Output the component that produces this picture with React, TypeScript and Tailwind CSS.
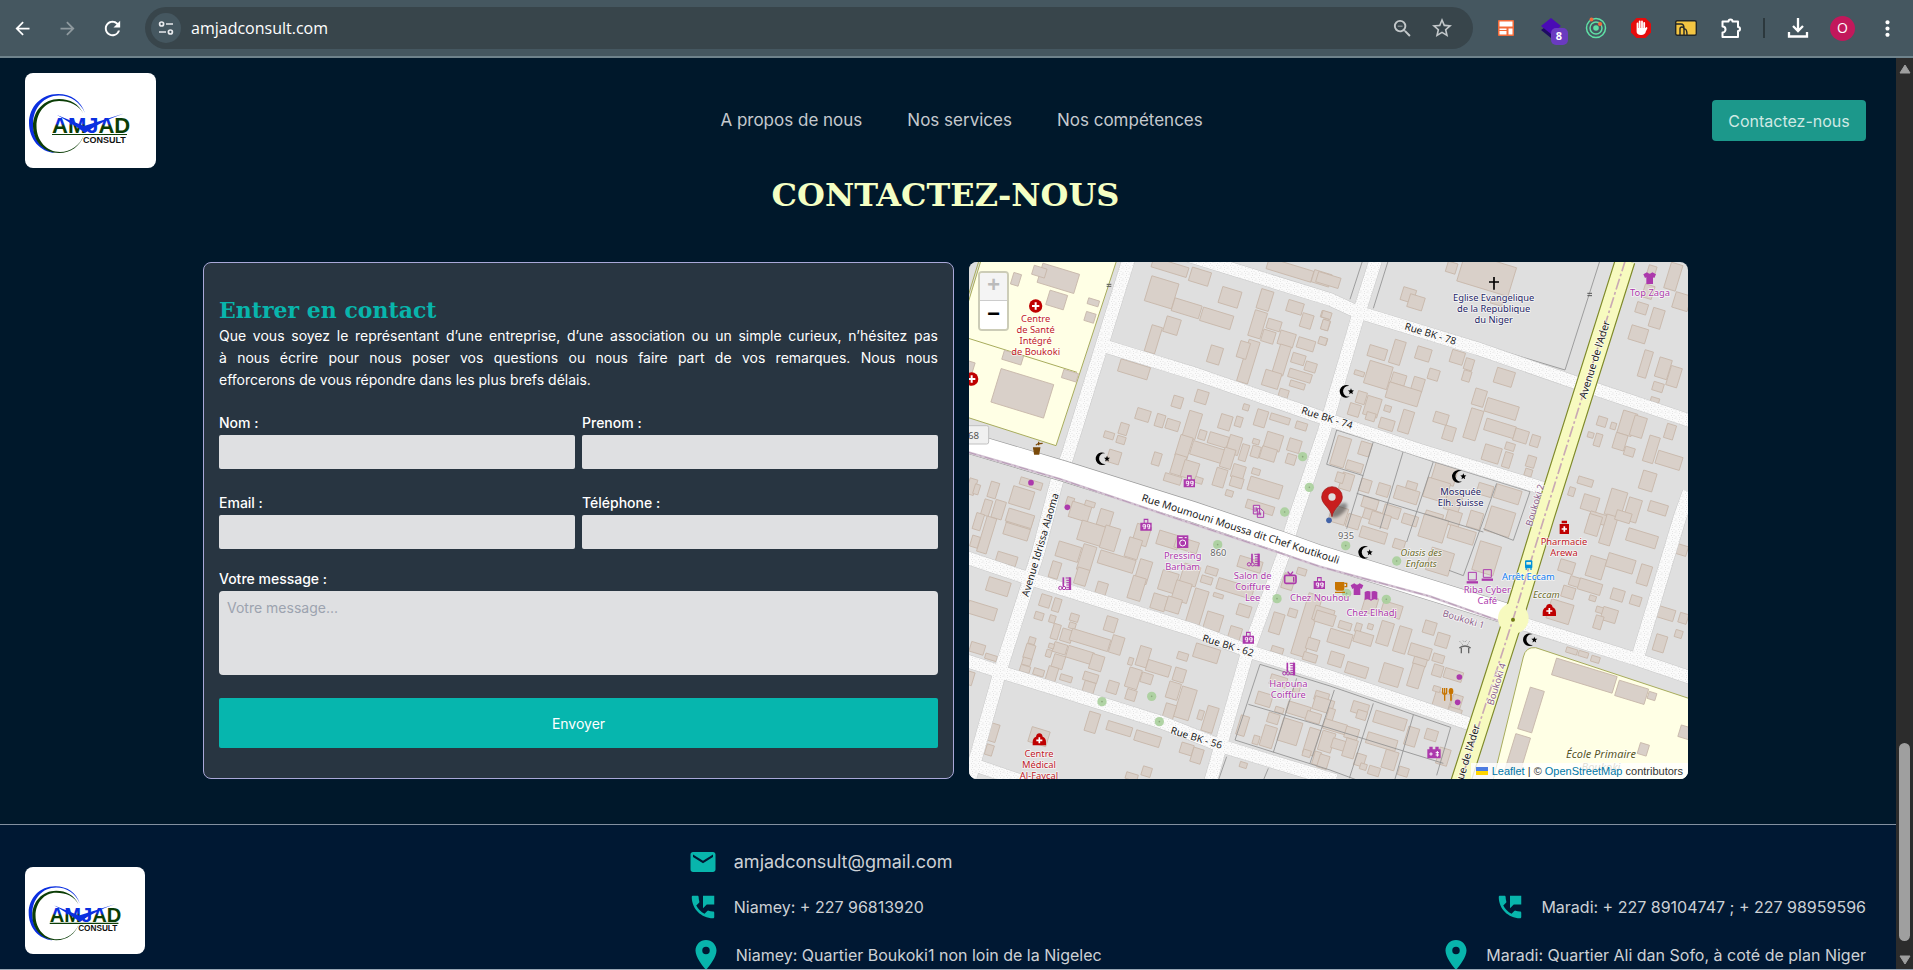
import type { ReactNode } from 'react'
import {
  MdArrowBack,
  MdArrowForward,
  MdEmail,
  MdLocationOn,
  MdMoreVert,
  MdPermPhoneMsg,
  MdRefresh,
  MdStarOutline,
  MdZoomOut,
} from 'react-icons/md'

/* ---------- Browser toolbar ---------- */

function ToolbarButton({ label, children }: { label: string; children: ReactNode }) {
  return (
    <button type="button" aria-label={label} className="flex h-10 w-[45px] shrink-0 items-center justify-center">
      {children}
    </button>
  )
}

function SiteInfoIcon() {
  return (
    <svg viewBox="0 0 16 16" className="size-4" fill="none" stroke="#e8eaed" strokeWidth="1.7">
      <circle cx="3.6" cy="4" r="2" />
      <path d="M8 4h7M1 12h7" />
      <circle cx="12.4" cy="12" r="2" />
    </svg>
  )
}

function BrowserToolbar() {
  return (
    <header className="flex h-[58px] shrink-0 items-center border-b-2 border-[#6f838c] bg-[#455760] pr-[3px]">
      <ToolbarButton label="Page précédente">
        <MdArrowBack size={21} color="#fff" />
      </ToolbarButton>
      <ToolbarButton label="Page suivante">
        <MdArrowForward size={21} color="#8f9a9f" />
      </ToolbarButton>
      <ToolbarButton label="Actualiser">
        <MdRefresh size={23} color="#fff" />
      </ToolbarButton>
      <div className="mx-[10px] flex h-[42px] flex-1 items-center rounded-full bg-[#38454b] pl-[6px]">
        <span className="flex size-[30px] items-center justify-center rounded-full bg-[#455760]">
          <SiteInfoIcon />
        </span>
        <input
          aria-label="Adresse"
          defaultValue="amjadconsult.com"
          className="ml-[10px] flex-1 bg-transparent font-['Open_Sans',sans-serif] text-[16px] text-white outline-none"
        />
        <button type="button" aria-label="Zoom" className="flex w-10 justify-center">
          <MdZoomOut size={23} color="#c3c8ca" />
        </button>
        <button type="button" aria-label="Favoris" className="mr-[11px] flex w-10 justify-center">
          <MdStarOutline size={24} color="#c3c8ca" />
        </button>
      </div>
      <ToolbarButton label="Extension grille">
        <svg viewBox="0 0 16 16" className="size-4">
          <rect width="16" height="16" rx="1" fill="#f26b3a" />
          <path d="M1.5 1.500h13v5h-13zM1.500 8.500h7v1.500h-7zM1.500 11h7v3.500h-7zM10.500 8.500h4v6h-4z" fill="#fff" />
        </svg>
      </ToolbarButton>
      <ToolbarButton label="Extension calques">
        <span className="relative">
          <svg viewBox="0 0 22 22" className="size-[22px]">
            <path d="M1 13l10 8 10-8-10-7z" fill="#1e0a63" />
            <path d="M11 1l10 8-10 8L1 9z" fill="#4a0bb5" />
          </svg>
          <span className="absolute top-[11px] left-[11px] flex h-[17px] w-[17px] items-center justify-center rounded-[5px] bg-[#6a3bc0] font-['Open_Sans',sans-serif] text-[11px] font-bold text-white">
            8
          </span>
        </span>
      </ToolbarButton>
      <ToolbarButton label="Extension orbite">
        <svg viewBox="0 0 22 22" className="size-[22px]" fill="none" stroke="#5fe0a5" strokeWidth="1.5">
          <circle cx="11" cy="11" r="9.500" />
          <circle cx="11" cy="11" r="6" />
          <circle cx="11" cy="11" r="2.800" fill="#5fe0a5" stroke="none" />
          <circle cx="6.500" cy="2.500" r="2" fill="#f26b3a" stroke="none" />
          <circle cx="15" cy="7" r="2" fill="#f26b3a" stroke="none" />
        </svg>
      </ToolbarButton>
      <ToolbarButton label="Bloqueur de publicités">
        <svg viewBox="0 0 22 22" className="size-[22px]">
          <path d="M6.500 1h9L21 6.500v9L15.500 21h-9L1 15.500v-9z" fill="#e60c0c" />
          <path
            d="M7.500 12V6.500M9.700 11V4.500M12 11V4.500M14.200 12V6M7.500 11v3.500c0 3 6.700 4 7.500-.5l1.500-3"
            stroke="#fff"
            strokeWidth="1.800"
            strokeLinecap="round"
            fill="#fff"
          />
        </svg>
      </ToolbarButton>
      <ToolbarButton label="Extension flux">
        <svg viewBox="0 0 22 16" className="h-4 w-[22px]">
          <rect x=".7" y=".7" width="20.600" height="14.600" rx="1.500" fill="#f4c542" stroke="#20262a" strokeWidth="1.400" />
          <path d="M1 4h5q3 0 3 4v7M5 15V9q0-2 2-2t2 2M9 9q3-1 3 6" fill="none" stroke="#20262a" strokeWidth="1.400" />
        </svg>
      </ToolbarButton>
      <ToolbarButton label="Extensions">
        <svg viewBox="0 0 22 22" className="size-[22px]" fill="none" stroke="#fff" strokeWidth="2" strokeLinejoin="round">
          <path d="M2.500 4.500H8.500A2 2 0 0 1 12.500 4.500H18V10A2 2 0 0 1 18 14V20H2.500V15.500A3 3 0 0 0 2.500 9.500Z" />
        </svg>
      </ToolbarButton>
      <span className="mx-[10px] h-5 w-[2px] bg-[#2c383d]" />
      <ToolbarButton label="Téléchargements">
        <svg viewBox="0 0 22 22" className="size-[22px]" fill="none" stroke="#fff" strokeWidth="2.300">
          <path d="M11 1v12.500M6 9l5 5 5-5M2 15v4.500h18V15" />
        </svg>
      </ToolbarButton>
      <ToolbarButton label="Profil">
        <span className="flex size-[25px] items-center justify-center rounded-full bg-[#c2185b] font-['Open_Sans',sans-serif] text-sm text-white">
          O
        </span>
      </ToolbarButton>
      <ToolbarButton label="Menu">
        <MdMoreVert size={25} color="#fff" />
      </ToolbarButton>
    </header>
  )
}

function Scrollbar() {
  return (
    <div aria-hidden="true" className="flex w-[17px] shrink-0 flex-col items-center bg-[#2c2c2c] pt-[6px] pb-[4px]">
      <svg viewBox="0 0 12 10" className="h-[10px] w-3">
        <path d="M6 1l5 8H1z" fill="#9f9f9f" stroke="#9f9f9f" strokeLinejoin="round" />
      </svg>
      <span className="flex-[669]" />
      <span className="w-[11px] flex-[198] rounded-full bg-[#9f9f9f]" />
      <svg viewBox="0 0 12 10" className="mt-[14px] h-[10px] w-3">
        <path d="M6 9L1 1h10z" fill="#9f9f9f" stroke="#9f9f9f" strokeLinejoin="round" />
      </svg>
    </div>
  )
}

/* ---------- Logo ---------- */

function Logo({ id, className }: { id: string; className: string }) {
  const fade = `url(#${id})`
  return (
    <a href="#accueil" aria-label="Amjad Consult" className={className}>
      <svg viewBox="0 0 131 95" className="block w-full">
        <defs>
          <linearGradient id={id} x1="0" y1="0" x2="0" y2="1">
            <stop offset="0.42" stopColor="#0a2fe0" />
            <stop offset="0.52" stopColor="#0b3d06" />
          </linearGradient>
        </defs>
        <path
          d="M60 40C56 28 46 21 33 21C16 21 4 34 4 50C4 66 15 79 30 80C17 76 8 66 8 51C8 35 19 22.500 34 22.500C46 22.500 55 29 60 40Z"
          fill="#0a2fe0"
        />
        <path
          d="M58.500 41C54 31 45 26 34 26C19 26 8 38 8 53C8 68 19 80 34 80C46 80 55 73 59 62C55 72 46 79 35 79C22 79 11.500 68 11.500 53C11.500 39 21 28 34 28C45 28 54 32 58.500 41Z"
          fill="#0b3d06"
        />
        <text x="27" y="60" fontSize="22" fontWeight="700" fontFamily="'Liberation Sans',sans-serif" fill={fade}>
          AM
          <tspan fill="#0a2fe0">J</tspan>
          <tspan fill={fade}>A</tspan>
          <tspan fill="#0b3d06">D</tspan>
        </text>
        <path d="M32 42L59 53L99 40.500C82 46 70 53 60 60C51 53 42 48 32 42Z" fill="#0a2fe0" />
        <path d="M27 61.500H102" stroke="#0b3d06" strokeWidth="1.200" />
        <text x="58" y="69.500" fontSize="9" fontWeight="700" fontFamily="'Liberation Sans',sans-serif" fill="#111">
          CONSULT
        </text>
      </svg>
    </a>
  )
}

/* ---------- Map drawing: [centre x, centre y, width, height] per sector ---------- */

const northWest = [
  [295, 70, 115, 60], [290, 135, 55, 45], [168, 73, 24, 36], [238, 50, 40, 28], [400, 142, 34, 18], [390, 187, 30, 28],
  [158, 308, 60, 28], [330, 362, 46, 26], [187, 415, 165, 105], [30, 340, 20, 40], [630, 37, 110, 30], [720, 65, 60, 42],
  [605, 112, 85, 78], [680, 160, 85, 40], [810, 127, 60, 50], [770, 190, 95, 42], [636, 212, 44, 48], [580, 253, 32, 82],
  [765, 300, 38, 52], [915, 135, 38, 60], [893, 208, 38, 80], [925, 245, 38, 36], [865, 320, 34, 130], [850, 285, 30, 50],
  [1005, 157, 48, 35], [942, 210, 42, 30], [1040, 198, 34, 42], [980, 252, 48, 42], [1038, 268, 52, 32], [965, 315, 34, 90],
  [1015, 312, 40, 30], [1052, 336, 34, 28], [935, 373, 50, 48], [1020, 362, 70, 26], [1012, 390, 46, 18], [971, 415, 28, 24],
  [1090, 258, 22, 20], [1097, 180, 28, 20], [1097, 210, 22, 30], [522, 343, 92, 38], [652, 441, 30, 34], [725, 426, 36, 38],
  [549, 480, 42, 34], [600, 497, 26, 38], [638, 510, 40, 30], [491, 522, 26, 34], [447, 541, 30, 20], [483, 555, 26, 22],
  [462, 606, 38, 38], [590, 612, 24, 38], [697, 510, 40, 80], [727, 540, 22, 28], [672, 575, 38, 65], [655, 630, 36, 60],
  [690, 645, 46, 52], [775, 555, 60, 34], [745, 592, 105, 42], [796, 502, 36, 44], [836, 500, 20, 30], [822, 570, 38, 55],
  [803, 610, 34, 60], [852, 593, 22, 50], [780, 668, 34, 55], [835, 650, 38, 40], [830, 682, 38, 30], [888, 560, 20, 15],
  [887, 590, 26, 34], [940, 560, 50, 50], [925, 597, 46, 38], [903, 490, 34, 50], [960, 492, 60, 20], [1024, 513, 34, 22],
  [1003, 572, 38, 38], [993, 613, 28, 30], [858, 457, 18, 18], [888, 650, 24, 18], [915, 698, 100, 42], [808, 715, 22, 18],
  [900, 757, 85, 26], [716, 676, 24, 18], [638, 672, 52, 24], [990, 45, 140, 34], [1085, 70, 55, 38], [35, 695, 24, 48],
  [50, 703, 16, 30], [100, 705, 26, 48], [213, 686, 68, 22], [185, 728, 66, 55], [80, 758, 24, 48], [116, 764, 32, 55],
  [180, 795, 76, 40], [330, 740, 22, 26], [360, 770, 60, 48], [390, 747, 30, 16], [435, 790, 40, 50],
]

const northEast = [
  [25, 75, 70, 32], [500, 58, 160, 90], [395, 38, 30, 32], [265, 120, 40, 40], [288, 142, 46, 40], [530, 140, 36, 18],
  [172, 293, 55, 34], [232, 292, 34, 72], [310, 297, 44, 38], [412, 307, 40, 38], [447, 328, 26, 34], [440, 363, 24, 32],
  [341, 359, 32, 32], [553, 367, 56, 46], [175, 360, 72, 70], [118, 355, 30, 14], [236, 372, 42, 32], [294, 388, 34, 40],
  [250, 418, 100, 48], [124, 428, 28, 36], [103, 465, 34, 36], [157, 455, 44, 58], [152, 485, 28, 24], [203, 461, 20, 18],
  [200, 508, 44, 32], [258, 500, 34, 68], [363, 490, 42, 32], [387, 535, 34, 42], [478, 428, 36, 50], [460, 508, 38, 92],
  [545, 462, 98, 42], [540, 520, 92, 36], [603, 543, 42, 38], [645, 558, 26, 34], [515, 597, 52, 48], [570, 575, 28, 22],
  [562, 615, 24, 46], [633, 620, 26, 34], [625, 653, 22, 22], [20, 180, 28, 20], [16, 210, 22, 30], [8, 258, 24, 22],
  [995, 48, 24, 32], [1060, 65, 36, 80], [1085, 140, 48, 48], [965, 160, 34, 32], [1010, 190, 36, 58], [955, 238, 52, 44],
  [976, 327, 26, 82], [1030, 340, 38, 60], [1062, 365, 34, 60], [1014, 396, 32, 26], [1005, 435, 26, 14], [846, 500, 28, 28],
  [880, 513, 16, 20], [812, 540, 18, 16], [834, 555, 20, 38], [922, 505, 44, 70], [955, 515, 38, 62], [900, 560, 36, 48],
  [928, 590, 30, 26], [1050, 530, 28, 44], [994, 583, 32, 80], [1047, 616, 76, 40], [983, 678, 42, 56], [796, 680, 46, 22],
  [755, 710, 18, 26], [810, 745, 48, 46], [888, 745, 50, 80], [938, 765, 40, 70], [1014, 760, 56, 32], [835, 790, 55, 30],
  [985, 110, 30, 40], [62, 590, 42, 90], [135, 582, 34, 40], [103, 635, 50, 28], [80, 680, 36, 50], [60, 668, 24, 30],
  [136, 692, 32, 38], [190, 705, 36, 36], [260, 720, 72, 40], [275, 692, 32, 22], [375, 655, 70, 60], [350, 705, 70, 60],
  [400, 740, 46, 56], [495, 705, 46, 34], [563, 718, 78, 42], [150, 745, 48, 32], [55, 780, 50, 50], [155, 780, 50, 30],
  [215, 770, 50, 34], [270, 795, 46, 30], [340, 790, 54, 36], [400, 790, 44, 44], [465, 795, 40, 50], [540, 795, 70, 50],
]

const southWest = [
  [55, 20, 24, 50], [80, 60, 30, 110], [180, 10, 80, 40], [170, 50, 76, 36], [140, 132, 62, 30], [45, 80, 24, 34],
  [115, 215, 68, 42], [65, 287, 88, 38], [52, 400, 44, 30], [93, 427, 36, 16], [30, 490, 20, 40], [395, 55, 76, 60],
  [450, 70, 46, 70], [325, 110, 70, 46], [285, 165, 28, 50], [380, 130, 40, 80], [365, 185, 36, 50], [425, 220, 32, 36],
  [470, 140, 110, 40], [545, 60, 44, 60], [520, 100, 40, 60], [550, 170, 38, 70], [530, 220, 40, 70], [625, 75, 66, 42],
  [680, 90, 70, 34], [690, 180, 50, 60], [625, 200, 50, 60], [665, 230, 48, 60], [597, 262, 44, 46], [640, 270, 44, 44],
  [870, 148, 72, 34], [755, 168, 36, 22], [740, 195, 34, 22], [825, 220, 110, 34], [775, 242, 30, 12], [712, 275, 42, 105],
  [760, 320, 50, 52], [852, 287, 40, 34], [825, 355, 36, 38], [740, 415, 76, 42], [668, 424, 32, 22], [950, 325, 34, 62],
  [998, 294, 26, 24], [952, 405, 36, 18], [1025, 170, 28, 20], [985, 200, 34, 46], [1040, 330, 42, 190], [1090, 300, 60, 44],
  [1058, 388, 36, 34], [1050, 427, 42, 24], [256, 258, 32, 36], [290, 270, 22, 40], [237, 303, 26, 22], [277, 312, 18, 22],
  [343, 308, 26, 22], [337, 332, 20, 18], [287, 350, 22, 46], [320, 362, 34, 38], [390, 375, 120, 36], [470, 390, 36, 54],
  [452, 328, 34, 44], [300, 400, 40, 30], [360, 420, 80, 36], [410, 443, 38, 46], [295, 440, 34, 40], [275, 480, 30, 50],
  [318, 490, 36, 18], [274, 393, 16, 14], [266, 415, 16, 22], [216, 377, 20, 20], [208, 410, 28, 44], [200, 440, 26, 22],
  [195, 462, 30, 20], [236, 472, 32, 20], [392, 487, 44, 26], [387, 517, 34, 34], [458, 517, 32, 36], [550, 425, 34, 60],
  [512, 439, 14, 22], [595, 460, 72, 34], [520, 490, 38, 60], [560, 490, 34, 30], [513, 540, 30, 32], [658, 480, 34, 40],
  [640, 527, 36, 50], [676, 565, 46, 95], [628, 590, 32, 46], [722, 600, 16, 28], [750, 613, 34, 78], [397, 622, 34, 60],
  [478, 641, 76, 28], [563, 671, 78, 32], [680, 702, 38, 32], [711, 722, 32, 44], [100, 653, 26, 54], [88, 705, 22, 32],
  [237, 665, 56, 46], [515, 785, 36, 20], [560, 770, 28, 28], [850, 750, 22, 16], [912, 553, 46, 38], [955, 498, 50, 30],
  [848, 632, 26, 60], [888, 675, 18, 26], [940, 610, 34, 30], [925, 665, 38, 64], [958, 585, 26, 16], [1015, 585, 70, 36],
  [990, 650, 60, 70], [1060, 607, 44, 30], [1055, 680, 34, 80], [1085, 545, 42, 28], [1070, 730, 20, 40], [1040, 715, 24, 20],
  [1010, 520, 20, 24],
]

const southEast = [
  [100, 20, 40, 40], [180, 15, 60, 40], [160, 60, 80, 34], [237, 88, 34, 28], [340, 40, 76, 70], [425, 60, 80, 40],
  [540, 20, 76, 76], [500, 130, 66, 90], [360, 140, 70, 70], [820, 30, 40, 60], [865, 45, 34, 90], [910, 5, 46, 30],
  [966, 70, 92, 38], [1085, 105, 34, 30], [740, 155, 46, 36], [828, 158, 50, 62], [902, 145, 84, 42], [973, 180, 34, 60],
  [765, 200, 34, 28], [745, 232, 38, 34], [810, 215, 70, 34], [893, 240, 38, 34], [947, 257, 32, 28], [818, 250, 20, 16],
  [720, 290, 70, 60], [840, 285, 24, 18], [868, 300, 46, 40], [835, 322, 24, 40], [1035, 295, 58, 34], [1090, 310, 26, 30],
  [1076, 357, 22, 22], [1020, 385, 34, 50], [755, 408, 34, 16], [790, 418, 30, 16], [826, 433, 26, 18], [793, 482, 190, 52],
  [935, 532, 92, 48], [996, 543, 24, 22], [633, 585, 44, 130], [592, 720, 46, 120], [970, 703, 28, 34], [1095, 652, 34, 36],
  [15, 310, 60, 34], [75, 332, 38, 22], [115, 338, 18, 26], [151, 335, 16, 16], [60, 370, 70, 42], [130, 370, 56, 34],
  [195, 355, 38, 70], [247, 375, 38, 78], [329, 338, 36, 38], [367, 376, 38, 40], [48, 433, 42, 40], [110, 465, 66, 34],
  [213, 480, 60, 60], [300, 410, 66, 36], [300, 440, 40, 22], [287, 483, 36, 70], [355, 430, 34, 24], [353, 467, 30, 34],
  [400, 480, 56, 30], [365, 560, 50, 54], [350, 522, 22, 16], [410, 560, 30, 40], [405, 590, 40, 20], [150, 270, 40, 50],
  [215, 285, 60, 40], [10, 570, 60, 40], [30, 605, 20, 50], [45, 635, 70, 30], [120, 580, 50, 34], [125, 600, 30, 26],
  [210, 617, 98, 36], [95, 655, 40, 34], [185, 680, 92, 34], [275, 665, 34, 56], [334, 660, 36, 32], [20, 680, 40, 60],
  [60, 690, 50, 30], [90, 700, 36, 56], [120, 735, 30, 36], [130, 755, 20, 18], [210, 735, 40, 56], [162, 768, 34, 26],
  [250, 770, 30, 26], [10, 740, 30, 40], [370, 725, 34, 50],
]

const sectors = [
  { at: 'translate(-27 -21)', buildings: northWest },
  { at: 'translate(1053 -21)', buildings: northEast },
  { at: 'translate(-27 759)', buildings: southWest },
  { at: 'translate(1053 759)', buildings: southEast },
]

const lanes = [
  'M478 -5L293 589L263 659L208 869L93 1229L0 1560',
  'M1220 -5L1168 159L1065 510L973 780L943 879L833 1179L724 1560',
  'M650 -22L1083 112L1163 149L1523 259L1813 359L2165 477',
  'M413 254L673 334L1063 468L1353 565L1723 679',
  'M-5 887L163 944L673 1104L843 1169L1083 1244L1503 1386',
  'M-5 1197L93 1229L573 1379L763 1454L1100 1556',
  'M5 1505L180 1565',
  'M1650 1082L1993 1189L2165 1247',
  'M2160 690L2133 765L2005 1190',
]

const mainRoad = 'M-5 542L283 627L673 750L933 838L1053 881L1613 1055'
const avenue = 'M1969 -5L1728 759L1633 1069L1475 1560'
const boundary = 'M-5 570L273 651L603 763L933 873L1053 914L1383 1003L1600 1080'

const halo = { paintOrder: 'stroke' as const, stroke: '#ffffffb0', strokeWidth: 5, strokeLinejoin: 'round' as const }

function PlaceLabel({ x, y, lines, fill, italic, size = 28 }: { x: number; y: number; lines: string[]; fill: string; italic?: boolean; size?: number }) {
  return (
    <text textAnchor="middle" fontSize={size} fill={fill} fontStyle={italic ? 'italic' : 'normal'} {...halo}>
      {lines.map((line, i) => (
        <tspan key={line} x={x} y={y + i * (size + 5)}>
          {line}
        </tspan>
      ))}
    </text>
  )
}

function StreetLabel(props: { x: number; y: number; angle: number; children: string; fill?: string; end?: boolean; size?: number }) {
  return (
    <text
      transform={`translate(${props.x} ${props.y}) rotate(${props.angle})`}
      fontSize={props.size ?? 30}
      fill={props.fill ?? '#222'}
      textAnchor={props.end ? 'end' : 'start'}
      {...halo}
    >
      {props.children}
    </text>
  )
}

type Spot = { x: number; y: number }

const Mosque = ({ x, y }: Spot) => (
  <g transform={`translate(${x} ${y})`} fill="#000">
    <path d="M8 -16A19 19 0 1 0 10 15A16 16 0 1 1 8 -16Z" />
    <path d="M13 -9l2.500 6 6.500.5-5 4.500 1.500 6.500-5.500-3.500-5.500 3.500 1.500-6.500-5-4.500 6.500-.5z" />
  </g>
)

const Shop = ({ x, y }: Spot) => (
  <g transform={`translate(${x} ${y})`}>
    <path d="M-17 -6H-7V-18H7V-6H17V18H-17Z" fill="#ac39ac" />
    <path d="M-4 -6V-14H4V-6Z" fill="#dfdfdf" />
    <path d="M-9 0H-2V7H-9V0M-2 0V12H-8M4 0H11V7H4V0M11 0V12H5" fill="none" stroke="#fff" strokeWidth="2.500" />
  </g>
)

const Barber = ({ x, y }: Spot) => (
  <g transform={`translate(${x} ${y})`} fill="none" stroke="#ac39ac" strokeWidth="5">
    <path d="M-5 -19V8" />
    <path d="M15 -19V19" strokeWidth="7" />
    <path d="M2 -17H15M4 -10H15M4 -3H15M4 4H15M4 11H15M2 17H15" strokeWidth="3" />
    <circle cx="-14" cy="13" r="5" strokeWidth="3" />
    <circle cx="-3" cy="13" r="5" strokeWidth="3" />
  </g>
)

const Laptop = ({ x, y }: Spot) => (
  <g transform={`translate(${x} ${y})`} fill="none" stroke="#ac39ac" strokeWidth="3">
    <path d="M-12 -15H12V8H-12Z" />
    <path d="M-17 15H17" strokeWidth="7" />
  </g>
)

const Shirt = ({ x, y }: Spot) => (
  <path transform={`translate(${x} ${y})`} d="M-8 -17Q0 -9 8 -17L19 -11L14 0L10 -2V18H-10V-2L-14 0L-19 -11Z" fill="#ac39ac" />
)

const HealthDot = ({ x, y }: Spot) => (
  <g transform={`translate(${x} ${y})`}>
    <circle r="20" fill="#bf0000" />
    <path d="M-11 0H11M0 -11V11" stroke="#fff" strokeWidth="6" />
  </g>
)

const DoctorBag = ({ x, y }: Spot) => (
  <g transform={`translate(${x} ${y})`}>
    <path d="M-10 -8Q-8 -18 0 -18Q8 -18 10 -8Q20 -4 20 8V18H-20V8Q-20 -4 -10 -8Z" fill="#bf0000" />
    <path d="M-9 3H9M0 -6V12" stroke="#fff" strokeWidth="5" />
  </g>
)

const Tree = ({ x, y }: Spot) => (
  <g transform={`translate(${x} ${y})`}>
    <circle r="14" fill="#a9cf9b" fillOpacity="0.9" />
    <circle r="2.500" fill="#8aa67c" />
  </g>
)

function MapDrawing() {
  return (
    <svg
      viewBox="0 0 2157 1551"
      preserveAspectRatio="xMidYMid slice"
      className="absolute inset-0 size-full font-['Noto_Sans',sans-serif]"
      role="img"
      aria-label="Plan du quartier Boukoki"
    >
      <defs>
        <pattern id="gravel" width="21" height="18" patternUnits="userSpaceOnUse">
          <rect width="21" height="18" fill="#fbfbfb" />
          <path
            d="M2 2h2v2h-2zM10 4h2v2h-2zM17 1h2v2h-2zM6 9h2v2h-2zM14 10h2v2h-2zM1 14h2v2h-2zM19 14h2v2h-2zM9 15h2v2h-2z"
            fill="#d2d2d2"
          />
        </pattern>
        <filter id="soft" x="-50%" y="-50%" width="200%" height="200%">
          <feGaussianBlur stdDeviation="5" />
        </filter>
      </defs>
      <rect width="2157" height="1551" fill="#dfdfdf" />

      <g fill="#ffffe5" stroke="#a8ac5c" strokeWidth="3">
        <path d="M36 -5H443L261 551L-5 466V130Z" />
        <path d="M-5 228L324 331" fill="none" />
        <path d="M1571 1560L1663 1185Q1670 1154 1700 1157L2165 1311V1560Z" />
        <path d="M0 -5H30L-5 110Z" fill="#dfdfdf" />
      </g>

      {sectors.map((sector) => (
        <g key={sector.at} transform={sector.at} fill="#d9d0c9" stroke="#c7b7aa" strokeWidth="2.500">
          {sector.buildings.map(([cx, cy, w, h], i) => (
            <rect key={i} x={cx - w / 2} y={cy - h / 2} width={w} height={h} transform={`rotate(17 ${cx} ${cy})`} />
          ))}
        </g>
      ))}

      <g fill="none" stroke="#8f8f8f" strokeWidth="2.500">
        <path d="M1181 -5L1143 112M1258 -5L1213 139M1893 -5L1788 324L1523 244" />
        <path d="M1103 504L1213 539L1393 599L1683 689L1633 835L1543 800M1103 504L1073 607L1183 641M1213 539L1133 800M1303 567L1233 800M1393 599L1313 840M1583 664L1483 941L1440 925M1163 694L1443 779L1543 810M1043 600L1003 740" />
        <path d="M873 1207L1083 1272L1445 1396L1403 1540M873 1207L798 1434L1083 1524L1180 1560M838 1327L1083 1399L1423 1504M983 1249L913 1471M1096 1284L1023 1504M1213 1324L1141 1549M1333 1359L1278 1551" />
        <path d="M773 1484L748 1555M898 1519L883 1555" />
      </g>

      <g fill="none" stroke="#c8c8c8" strokeWidth="41">
        {lanes.map((d) => (
          <path key={d} d={d} />
        ))}
      </g>
      <g fill="none" stroke="url(#gravel)" strokeWidth="38">
        {lanes.map((d) => (
          <path key={d} d={d} />
        ))}
      </g>
      <path d={mainRoad} fill="none" stroke="#9c9c9c" strokeWidth="64" />
      <path d={mainRoad} fill="none" stroke="#fff" strokeWidth="60" />
      <path d={boundary} fill="none" stroke="#d3c3d2" strokeWidth="7" />
      <path d={boundary} fill="none" stroke="#b79ab6" strokeWidth="3" strokeDasharray="28 10 6 10" />

      <path d={avenue} fill="none" stroke="#7f8a2a" strokeWidth="62" />
      <circle cx="1633" cy="1069" r="46" fill="#f7fabf" />
      <path d={avenue} fill="none" stroke="#f7fabf" strokeWidth="55" />
      <path d={avenue} fill="none" stroke="#c9a9b4" strokeWidth="5" strokeDasharray="34 8 8 8" />
      <circle cx="1632" cy="1073" r="6" fill="#6f7a10" />

      {[[1001, 584], [1021, 676], [947, 750], [746, 848], [924, 1010], [399, 1319], [548, 1303], [571, 1379], [1130, 851], [1283, 897], [1133, 994], [1252, 1012]].map(
        ([x, y]) => (
          <Tree key={`${x}-${y}`} x={x} y={y} />
        ),
      )}

      {[[401, 590], [1133, 388], [1470, 643], [1189, 871], [1683, 1133]].map(([x, y]) => (
        <Mosque key={`${x}-${y}`} x={x} y={y} />
      ))}
      {[[661, 658], [531, 788], [838, 1127], [1051, 963]].map(([x, y]) => (
        <Shop key={`${x}-${y}`} x={x} y={y} />
      ))}
      {[[288, 965], [854, 894], [960, 1221]].map(([x, y]) => (
        <Barber key={`${x}-${y}`} x={x} y={y} />
      ))}
      {[[186, 662], [295, 736], [1471, 1245], [1466, 1321]].map(([x, y]) => (
        <circle key={`${x}-${y}`} cx={x} cy={y} r="8.500" fill="#ac39ac" />
      ))}
      <Laptop x={1510} y={946} />
      <Laptop x={1555} y={938} />
      <Shirt x={2042} y={48} />
      <Shirt x={1164} y={981} />
      <HealthDot x={200} y={132} />
      <HealthDot x={8} y={351} />
      <DoctorBag x={211} y={1432} />
      <DoctorBag x={1741} y={1044} />

      <g transform="translate(1786 796)">
        <path d="M-8 -20H8V-12H-8ZM-14 -10H14V20H-14Z" fill="#bf0000" />
        <path d="M-8 5H8M0 -3V13" stroke="#fff" strokeWidth="5" />
      </g>
      <g transform="translate(641 839)">
        <rect x="-17" y="-19" width="34" height="38" fill="#ac39ac" />
        <circle cy="4" r="9" fill="none" stroke="#fff" strokeWidth="3" />
        <path d="M-12 -12H0M6 -12H12" stroke="#fff" strokeWidth="3" />
      </g>
      <g transform="translate(964 949)" fill="none" stroke="#ac39ac" strokeWidth="5">
        <rect x="-17" y="-9" width="34" height="24" rx="4" />
        <path d="M-8 -20L0 -10L8 -20M10 -4V10" strokeWidth="4" />
      </g>
      <g transform="translate(868 748)" fill="#dfdfdf" stroke="#ac39ac" strokeWidth="3">
        <path d="M-15 -18H4V8H-15ZM-3 -8H7L16 0V18H-3Z" />
        <path d="M-10 -12V2M-5 -12V0M2 0V12M7 4V12" />
      </g>
      <path d="M1187 990Q1197 984 1206 990Q1215 984 1225 990V1014Q1215 1008 1206 1016Q1197 1008 1187 1014Z" fill="#ac39ac" />
      <path d="M1206 990V1012" stroke="#fff" strokeWidth="2.500" />
      <g transform="translate(1116 976)">
        <path d="M-18 -16H10V4Q10 10 4 10H-12Q-18 10 -18 4ZM-18 13H12V17H-18Z" fill="#c77400" />
        <path d="M10 -12H17V-2H10" fill="none" stroke="#c77400" strokeWidth="4" />
      </g>
      <g transform="translate(1436 1297)" fill="none" stroke="#c77400" strokeWidth="4">
        <path d="M-15 -19V-6Q-15 0 -9 0Q-3 0 -3 -6V-19M-9 -19V19" />
        <path d="M10 0V19" strokeWidth="5" />
        <ellipse cx="10" cy="-9" rx="7" ry="10" fill="#c77400" stroke="none" />
      </g>
      <g transform="translate(203 564)" fill="none" stroke="#7a4a0a" strokeWidth="4">
        <path d="M-9 -6H9L6 12H-6Z" fill="#7a4a0a" />
        <path d="M-2 -14Q0 -20 18 -20M6 -25V-14" />
      </g>
      <g transform="translate(1679 908)">
        <rect x="-11" y="-13" width="22" height="24" rx="3" fill="#0092da" />
        <path d="M-7 -8H7V0H-7Z" fill="#e6f0d0" />
        <path d="M-7 11V15M7 11V15" stroke="#0092da" strokeWidth="5" />
      </g>
      <g transform="translate(1395 1472)">
        <path d="M-20 -10H-14V-18H-4V-10H4V-18H14V-10H20V17H-20Z" fill="#ac39ac" />
        <path d="M-14 4H-4M-9 -1V9M5 0H15M5 7H15M10 -5V12" stroke="#fff" strokeWidth="3" />
      </g>
      <g transform="translate(1488 1158)" fill="none" stroke="#666" strokeWidth="4">
        <path d="M-17 0Q0 -12 17 0M-11 0V16M11 0V16" />
        <path d="M-16 -20l3 3M-6 -22l3 3M4 -22l-3 3M14 -20l-3 3M-10 -13l3 3M10 -13l-3 3" strokeWidth="2" />
      </g>
      <path d="M1575 45V83M1560 60H1590" stroke="#000" strokeWidth="5" />
      <path d="M413 67H427M413 73H427M1855 94H1869M1855 101H1869" stroke="#555" strokeWidth="3" />

      <rect x="-20" y="491" width="79" height="55" rx="6" fill="#f0f0f0" stroke="#c0c0c0" strokeWidth="3" />
      <text x="-3" y="531" fontSize="29" fill="#555">
        68
      </text>

      <PlaceLabel x={200} y={181} fill="#bf1828" lines={['Centre', 'de Santé', 'Intégré', 'de Boukoki']} />
      <PlaceLabel x={1574} y={118} fill="#1f1f66" lines={['Eglise Evangelique', 'de la Republique', 'du Niger']} />
      <PlaceLabel x={1475} y={698} fill="#1f1f66" lines={['Mosquée', 'Elh. Suisse']} />
      <PlaceLabel x={2043} y={102} fill="#ac39ac" lines={['Top Zaga']} />
      <PlaceLabel x={641} y={892} fill="#ac39ac" lines={['Pressing', 'Barham']} />
      <PlaceLabel x={851} y={951} fill="#ac39ac" lines={['Salon de', 'Coiffure', 'Lee']} />
      <PlaceLabel x={1052} y={1017} fill="#ac39ac" lines={['Chez Nouhou']} />
      <PlaceLabel x={1208} y={1061} fill="#ac39ac" lines={['Chez Elhadj']} />
      <PlaceLabel x={958} y={1275} fill="#ac39ac" lines={['Harouna', 'Coiffure']} />
      <PlaceLabel x={1555} y={994} fill="#ac39ac" lines={['Riba Cyber', 'Café']} />
      <PlaceLabel x={1785} y={849} fill="#bf1828" lines={['Pharmacie', 'Arewa']} />
      <PlaceLabel x={210} y={1486} fill="#bf1828" lines={['Centre', 'Médical', 'Al-Fayçal']} />
      <PlaceLabel x={1678} y={953} fill="#0d7cf2" lines={['Arrêt Eccam']} />
      <PlaceLabel x={1732} y={1008} fill="#6b6b2a" lines={['Eccam']} italic />
      <PlaceLabel x={1357} y={883} fill="#6b6b2a" lines={['Oiasis des', 'Enfants']} italic />
      <PlaceLabel x={1896} y={1489} fill="#57571f" lines={['École Primaire', 'Boukoki']} italic size={33} />
      <PlaceLabel x={1131} y={830} fill="#666" lines={['935']} />
      <PlaceLabel x={748} y={881} fill="#666" lines={['860']} />

      <StreetLabel x={516} y={716} angle={17.8} size={31}>Rue Moumouni Moussa dit Chef Koutikouli</StreetLabel>
      <StreetLabel x={995} y={454} angle={17}>Rue BK - 74</StreetLabel>
      <StreetLabel x={1305} y={202} angle={17}>Rue BK - 78</StreetLabel>
      <StreetLabel x={698} y={1137} angle={17}>Rue BK - 62</StreetLabel>
      <StreetLabel x={603} y={1414} angle={17}>Rue BK - 56</StreetLabel>
      <StreetLabel x={178} y={1006} angle={-73.5}>Avenue Idrissa Alaoma</StreetLabel>
      <StreetLabel x={1850} y={412} angle={-72.5} size={31}>Avenue de l'Ader</StreetLabel>
      <StreetLabel x={1533} y={1391} angle={-73} size={31} end>Avenue de l'Ader</StreetLabel>
      <StreetLabel x={1688} y={794} angle={-73} fill="#8d618b" size={28}>Boukoki 2</StreetLabel>
      <StreetLabel x={1573} y={1331} angle={-73} fill="#8d618b" size={28}>Boukoki 4</StreetLabel>
      <StreetLabel x={1419} y={1062} angle={17} fill="#8d618b" size={28}>Boukoki 1</StreetLabel>

      <ellipse cx="1110" cy="745" rx="30" ry="14" transform="rotate(-40 1110 745)" fill="#000" fillOpacity="0.4" filter="url(#soft)" />
      <circle cx="1080" cy="775" r="8.500" fill="#4263a8" />
      <path d="M1089 764C1084 736 1058 728 1058 705A31 31 0 0 1 1120 705C1120 728 1094 736 1089 764Z" fill="#c81e1e" stroke="#9b1515" strokeWidth="2" />
      <circle cx="1089" cy="705" r="11" fill="#dfdfdf" />
    </svg>
  )
}

function MapPanel() {
  return (
    <section aria-label="Carte" className="relative isolate overflow-hidden rounded-lg">
      <MapDrawing />
      <div className="absolute top-[9px] left-[9px] flex flex-col overflow-hidden rounded border-2 border-black/20 bg-clip-padding font-['Liberation_Mono',monospace] text-[22px] font-bold">
        <button type="button" aria-label="Zoom avant" disabled className="flex h-7 w-[27px] items-center justify-center border-b border-[#ccc] bg-[#f4f4f4] text-[#bbb]">
          +
        </button>
        <button type="button" aria-label="Zoom arrière" className="flex h-7 w-[27px] items-center justify-center bg-white text-black">
          −
        </button>
      </div>
      <p className="absolute right-0 bottom-0 flex items-center bg-white/80 px-[5px] font-['Liberation_Sans',sans-serif] text-[11px] leading-4 whitespace-pre text-[#333]">
        <svg viewBox="0 0 12 8" className="mr-1 h-2 w-3">
          <path fill="#4c7be1" d="M0 0h12v4H0z" />
          <path fill="#ffd500" d="M0 4h12v4H0z" />
        </svg>
        <a href="#leaflet" className="text-[#0078a8]">Leaflet</a>
        {' | © '}
        <a href="#openstreetmap" className="text-[#0078a8]">OpenStreetMap</a>
        {' contributors'}
      </p>
    </section>
  )
}

/* ---------- Contact form ---------- */

function Field({ id, label, type = 'text' }: { id: string; label: string; type?: string }) {
  return (
    <div className="flex flex-col gap-[2px]">
      <label htmlFor={id} className="text-[14px] leading-5 font-medium">{label}</label>
      <input id={id} type={type} className="h-[34px] w-full rounded-xs bg-[#dfe0e2] px-2 text-[14px] text-gray-800" />
    </div>
  )
}

function ContactForm() {
  return (
    <form className="rounded-lg border border-[#a9a8d8] bg-[#283541] px-[15px] pt-8 pb-[30px] text-white">
      <h2 className="font-['DejaVu_Serif',serif] text-[22px] leading-[30px] font-bold text-[#08b5ac]">Entrer en contact</h2>
      <p className="text-justify text-[14px] leading-[22px]">
        Que vous soyez le représentant d’une entreprise, d’une association ou un simple curieux, n’hésitez pas{' '}
        <span className="whitespace-nowrap">à nous écrire</span> pour nous poser vos questions ou nous faire part de vos
        remarques. Nous nous <span className="whitespace-nowrap">efforcerons de vous répondre</span> dans les plus brefs
        délais.
      </p>
      <div className="mt-[22px] grid grid-cols-2 gap-x-[7px] gap-y-6">
        <Field id="nom" label="Nom :" />
        <Field id="prenom" label="Prenom :" />
        <Field id="email" label="Email :" type="email" />
        <Field id="telephone" label="Téléphone :" type="tel" />
      </div>
      <div className="mt-5 flex flex-col gap-[2px]">
        <label htmlFor="message" className="text-[14px] leading-5 font-medium">Votre message :</label>
        <textarea
          id="message"
          placeholder="Votre message..."
          className="h-[84px] w-full resize-none rounded bg-[#dfe0e2] px-2 py-[7px] text-[14px] leading-5 text-gray-800 placeholder:text-[#9ca3af]"
        />
      </div>
      <button type="button" className="mt-[23px] h-[50px] w-full rounded-xs bg-[#06b6ae] text-[14px]">
        Envoyer
      </button>
    </form>
  )
}

/* ---------- Page ---------- */

function ContactLine({ icon, href, children, className }: { icon: ReactNode; href: string; children: string; className: string }) {
  return (
    <a href={href} className={className}>
      <span className="text-[#08b5ac]">{icon}</span>
      {children}
    </a>
  )
}

function SiteFooter() {
  return (
    <footer className="flex shrink-0 justify-between border-t border-[#8390a0] bg-[#001833] pr-[30px] pl-[25px] text-[#cdd1d6]">
      <Logo id="fade-footer" className="mt-[42px] h-[87px] w-[120px] shrink-0 overflow-hidden rounded-lg bg-white" />
      <address className="w-[64%] pt-[14px] not-italic">
        <div className="flex h-[45px] items-center">
          <ContactLine className="flex items-center gap-4 text-[18px]" icon={<MdEmail size={30} />} href="#email">
            amjadconsult@gmail.com
          </ContactLine>
        </div>
        <div className="flex h-[45px] items-center justify-between text-[16px]">
          <ContactLine className="flex items-center gap-4" icon={<MdPermPhoneMsg size={30} />} href="#niamey">
            Niamey: + 227 96813920
          </ContactLine>
          <ContactLine className="flex items-center gap-4" icon={<MdPermPhoneMsg size={30} />} href="#maradi">
            Maradi: + 227 89104747 ; + 227 98959596
          </ContactLine>
        </div>
        <div className="flex h-[52px] items-center justify-between text-[16px]">
          <ContactLine className="flex items-center gap-3" icon={<MdLocationOn size={36} />} href="#plan-niamey">
            Niamey: Quartier Boukoki1 non loin de la Nigelec
          </ContactLine>
          <ContactLine className="flex items-center gap-3" icon={<MdLocationOn size={36} />} href="#plan-maradi">
            Maradi: Quartier Ali dan Sofo, à coté de plan Niger
          </ContactLine>
        </div>
      </address>
    </footer>
  )
}

export default function App() {
  return (
    <div className="flex h-screen flex-col overflow-hidden bg-[#00182b] font-['Inter',sans-serif]">
      <BrowserToolbar />
      <div className="flex min-h-0 flex-1">
        <div className="flex min-w-0 flex-1 flex-col overflow-hidden">
          <div className="flex shrink-0 items-center pt-[15px] pr-[30px] pl-[25px] text-[#c5c9ce]">
            <Logo id="fade-header" className="w-[131px] shrink-0 overflow-hidden rounded-lg bg-white" />
            <span className="flex-[563]" />
            <nav className="flex gap-[45px] text-[17px] whitespace-nowrap">
              <a href="#apropos">A propos de nous</a>
              <a href="#services">Nos services</a>
              <a href="#competences">Nos compétences</a>
            </nav>
            <span className="flex-[508]" />
            <a href="#contact" className="flex h-[41px] w-[154px] items-center justify-center rounded bg-[#1c988b] text-[16px] text-[#cfe9e4]">
              Contactez-nous
            </a>
          </div>
          <main className="shrink-0 pr-[5px] pb-[45px]">
            <h1 className="mb-10 text-center font-['DejaVu_Serif',serif] text-[32px] leading-[54px] font-bold text-[#f4ffc4]">
              CONTACTEZ-NOUS
            </h1>
            <div className="mx-auto grid max-w-[1485px] grid-cols-[751fr_719fr] gap-[15px]">
              <ContactForm />
              <MapPanel />
            </div>
          </main>
          <SiteFooter />
        </div>
        <Scrollbar />
      </div>
      <div className="h-px shrink-0 bg-[#9aa7b5]" />
    </div>
  )
}
